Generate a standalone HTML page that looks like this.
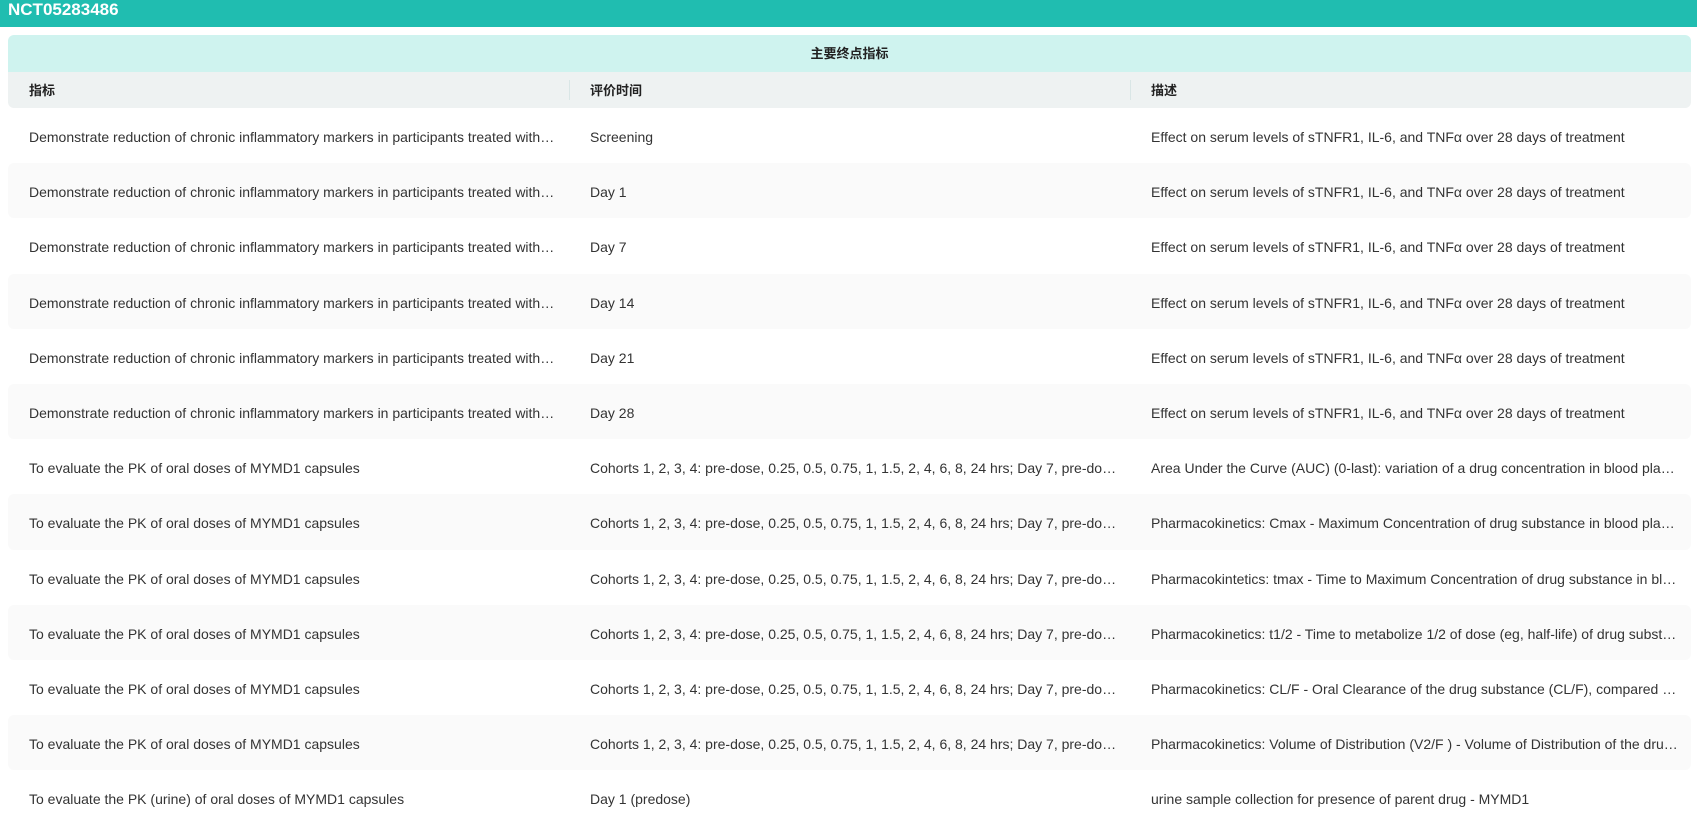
<!DOCTYPE html>
<html><head><meta charset="utf-8"><style>
html,body{margin:0;padding:0;background:#fff;width:1697px;height:811px;overflow:hidden;font-family:"Liberation Sans","Noto Sans CJK SC",sans-serif;}
.top{height:27px;background:#20bdb0;color:#fff;font-weight:bold;font-size:17px;line-height:20px;padding-left:8px;}
.title{position:absolute;left:8px;top:35px;width:1683px;height:37px;background:#cff3ef;border-radius:6px 6px 0 0;text-align:center;font-weight:bold;font-size:13px;line-height:37px;color:#222;}
.head{position:absolute;left:8px;top:72px;width:1683px;height:36px;background:#eef2f2;border-radius:0 0 6px 6px;display:flex;font-weight:bold;font-size:13px;color:#222;line-height:37px;}
.head div{flex:0 0 561px;box-sizing:border-box;padding-left:21px;position:relative;}
.head div+div:before{content:"";position:absolute;left:0;top:8px;height:20px;width:1px;background:#d9e6e6;}
.rows{position:absolute;left:8px;top:108px;width:1683px;}
.r{height:55.2px;display:flex;font-size:14px;color:#333;line-height:58px;border-radius:6px;}
.r:nth-child(even){background:#fafafa;}
.r div{flex:0 0 561px;box-sizing:border-box;padding:0 12px 0 21px;white-space:nowrap;overflow:hidden;text-overflow:ellipsis;}
</style></head><body>
<div class="top">NCT05283486</div>
<div class="title">主要终点指标</div>
<div class="head"><div>指标</div><div>评价时间</div><div>描述</div></div>
<div class="rows">
<div class="r"><div>Demonstrate reduction of chronic inflammatory markers in participants treated with MYMD1</div><div>Screening</div><div>Effect on serum levels of sTNFR1, IL-6, and TNFα over 28 days of treatment</div></div>
<div class="r"><div>Demonstrate reduction of chronic inflammatory markers in participants treated with MYMD1</div><div>Day 1</div><div>Effect on serum levels of sTNFR1, IL-6, and TNFα over 28 days of treatment</div></div>
<div class="r"><div>Demonstrate reduction of chronic inflammatory markers in participants treated with MYMD1</div><div>Day 7</div><div>Effect on serum levels of sTNFR1, IL-6, and TNFα over 28 days of treatment</div></div>
<div class="r"><div>Demonstrate reduction of chronic inflammatory markers in participants treated with MYMD1</div><div>Day 14</div><div>Effect on serum levels of sTNFR1, IL-6, and TNFα over 28 days of treatment</div></div>
<div class="r"><div>Demonstrate reduction of chronic inflammatory markers in participants treated with MYMD1</div><div>Day 21</div><div>Effect on serum levels of sTNFR1, IL-6, and TNFα over 28 days of treatment</div></div>
<div class="r"><div>Demonstrate reduction of chronic inflammatory markers in participants treated with MYMD1</div><div>Day 28</div><div>Effect on serum levels of sTNFR1, IL-6, and TNFα over 28 days of treatment</div></div>
<div class="r"><div>To evaluate the PK of oral doses of MYMD1 capsules</div><div>Cohorts 1, 2, 3, 4: pre-dose, 0.25, 0.5, 0.75, 1, 1.5, 2, 4, 6, 8, 24 hrs; Day 7, pre-dose, 0.25, 0.5</div><div>Area Under the Curve (AUC) (0-last): variation of a drug concentration in blood plasma over time</div></div>
<div class="r"><div>To evaluate the PK of oral doses of MYMD1 capsules</div><div>Cohorts 1, 2, 3, 4: pre-dose, 0.25, 0.5, 0.75, 1, 1.5, 2, 4, 6, 8, 24 hrs; Day 7, pre-dose, 0.25, 0.5</div><div>Pharmacokinetics: Cmax - Maximum Concentration of drug substance in blood plasma over time</div></div>
<div class="r"><div>To evaluate the PK of oral doses of MYMD1 capsules</div><div>Cohorts 1, 2, 3, 4: pre-dose, 0.25, 0.5, 0.75, 1, 1.5, 2, 4, 6, 8, 24 hrs; Day 7, pre-dose, 0.25, 0.5</div><div>Pharmacokintetics: tmax - Time to Maximum Concentration of drug substance in blood plasma</div></div>
<div class="r"><div>To evaluate the PK of oral doses of MYMD1 capsules</div><div>Cohorts 1, 2, 3, 4: pre-dose, 0.25, 0.5, 0.75, 1, 1.5, 2, 4, 6, 8, 24 hrs; Day 7, pre-dose, 0.25, 0.5</div><div>Pharmacokinetics: t1/2 - Time to metabolize 1/2 of dose (eg, half-life) of drug substance in plasma</div></div>
<div class="r"><div>To evaluate the PK of oral doses of MYMD1 capsules</div><div>Cohorts 1, 2, 3, 4: pre-dose, 0.25, 0.5, 0.75, 1, 1.5, 2, 4, 6, 8, 24 hrs; Day 7, pre-dose, 0.25, 0.5</div><div>Pharmacokinetics: CL/F - Oral Clearance of the drug substance (CL/F), compared across cohorts</div></div>
<div class="r"><div>To evaluate the PK of oral doses of MYMD1 capsules</div><div>Cohorts 1, 2, 3, 4: pre-dose, 0.25, 0.5, 0.75, 1, 1.5, 2, 4, 6, 8, 24 hrs; Day 7, pre-dose, 0.25, 0.5</div><div>Pharmacokinetics: Volume of Distribution (V2/F ) - Volume of Distribution of the drug substance</div></div>
<div class="r"><div>To evaluate the PK (urine) of oral doses of MYMD1 capsules</div><div>Day 1 (predose)</div><div>urine sample collection for presence of parent drug - MYMD1</div></div>
</div>
</body></html>
